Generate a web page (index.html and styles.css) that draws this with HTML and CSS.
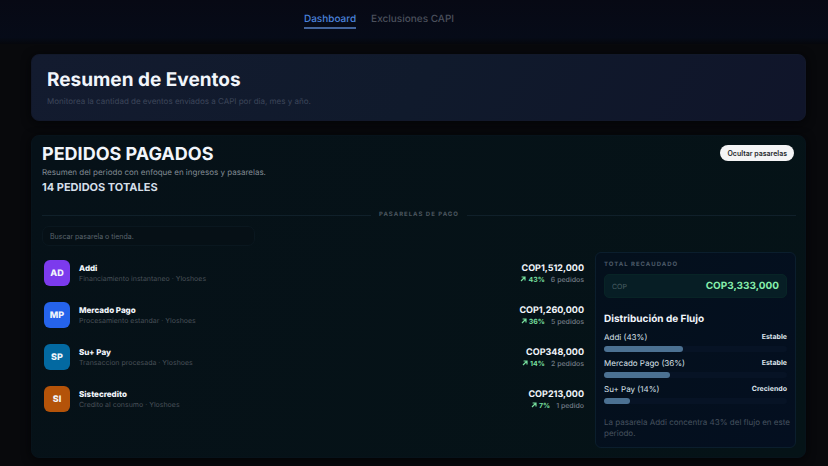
FILE: index.html
```html
<!DOCTYPE html>
<html lang="es">
<head>
<meta charset="utf-8">
<meta name="viewport" content="width=device-width, initial-scale=1">
<title>Resumen de Eventos</title>
<link rel="stylesheet" href="styles.css">
</head>
<body>
<svg class="defs" aria-hidden="true"><symbol id="up" viewBox="0 0 6 6"><path d="M1 5 5 1M1.6 1H5v3.4" fill="none" stroke="currentColor" stroke-width="1.2"/></symbol></svg>
<nav class="nav">
  <a class="tab active" href="#dashboard">Dashboard</a>
  <a class="tab" href="#exclusiones">Exclusiones CAPI</a>
</nav>
<main class="page">
  <header class="hero">
    <h1>Resumen de Eventos</h1>
    <p>Monitorea la cantidad de eventos enviados a CAPI por dia, mes y año.</p>
  </header>
  <section class="orders">
    <div class="top">
      <div>
        <h2>PEDIDOS PAGADOS</h2>
        <p class="sub">Resumen del periodo con enfoque en ingresos y pasarelas.</p>
        <p class="count">14 PEDIDOS TOTALES</p>
      </div>
      <button class="hide" type="button">Ocultar pasarelas</button>
    </div>
    <div class="divider"><span>PASARELAS DE PAGO</span></div>
    <input class="search" type="text" aria-label="Buscar pasarela o tienda" placeholder="Buscar pasarela o tienda.">
    <div class="body">
      <ul class="list">
        <li>
          <span class="avatar violet">AD</span>
          <div class="who"><strong>Addi</strong><span>Financiamiento instantaneo · Yloshoes</span></div>
          <div class="sum"><strong>COP1,512,000</strong><span><b><svg class="up"><use href="#up"/></svg>43%</b>6 pedidos</span></div>
        </li>
        <li>
          <span class="avatar blue">MP</span>
          <div class="who"><strong>Mercado Pago</strong><span>Procesamiento estandar · Yloshoes</span></div>
          <div class="sum"><strong>COP1,260,000</strong><span><b><svg class="up"><use href="#up"/></svg>36%</b>5 pedidos</span></div>
        </li>
        <li>
          <span class="avatar cyan">SP</span>
          <div class="who"><strong>Su+ Pay</strong><span>Transaccion procesada · Yloshoes</span></div>
          <div class="sum"><strong>COP348,000</strong><span><b><svg class="up"><use href="#up"/></svg>14%</b>2 pedidos</span></div>
        </li>
        <li>
          <span class="avatar orange">SI</span>
          <div class="who"><strong>Sistecredito</strong><span>Credito al consumo · Yloshoes</span></div>
          <div class="sum"><strong>COP213,000</strong><span><b><svg class="up"><use href="#up"/></svg>7%</b>1 pedido</span></div>
        </li>
      </ul>
      <aside class="side">
        <p class="label">TOTAL RECAUDADO</p>
        <div class="total"><span>COP</span><strong>COP3,333,000</strong></div>
        <h3>Distribución de Flujo</h3>
        <div class="flow"><span>Addi (43%)</span><b>Estable</b></div>
        <div class="bar"><i style="width:43%"></i></div>
        <div class="flow"><span>Mercado Pago (36%)</span><b>Estable</b></div>
        <div class="bar"><i style="width:36%"></i></div>
        <div class="flow"><span>Su+ Pay (14%)</span><b>Creciendo</b></div>
        <div class="bar"><i style="width:14%"></i></div>
        <p class="note">La pasarela Addi concentra 43% del flujo en este periodo.</p>
      </aside>
    </div>
  </section>
</main>
</body>
</html>
```
FILE: styles.css
```css
* { box-sizing: border-box; margin: 0; padding: 0; }
body { background: #08090c; color: #f1f5fb; font-family: Inter, "Liberation Sans", sans-serif; font-size: 8px; text-rendering: geometricPrecision; }
.defs { display: none; }
.nav { display: flex; justify-content: center; gap: 15px; height: 44px; padding: 10px 70px 0 0; background: linear-gradient(#070914, #060b18 85%, #05070c); }
.tab { height: 19px; font-size: 10px; line-height: 18px; font-weight: 500; color: #4b505c; text-decoration: none; }
.tab.active { color: #4b83dc; border-bottom: 2px solid #43649a; }
.page { padding: 10px 22px 8px 31px; }
.hero { padding: 13px 15px; border: 1px solid #12182a; border-radius: 8px; background: linear-gradient(120deg, #131b2f, #101a2c 50%, #10152a); box-shadow: 0 2px 10px #030406; }
h1 { font-size: 19px; line-height: 24px; font-weight: 700; }
.hero p { margin-top: 3px; font-size: 8px; line-height: 12px; color: #3d465a; }
.orders { margin-top: 14px; padding: 8px 9px 9px 10px; border: 1px solid #07131b; border-radius: 8px; background: linear-gradient(120deg, #061118, #051317); box-shadow: 0 2px 10px #030406; }
.top { display: flex; justify-content: space-between; align-items: flex-start; }
h2 { font-size: 18px; line-height: 22px; font-weight: 700; }
.sub { line-height: 12px; color: #828b94; }
.count { margin-top: 2px; font-size: 11px; line-height: 14px; font-weight: 700; color: #d5dfe8; }
.hide { margin: 1px 2px 0 0; height: 16px; padding: 0 7px; border: 0; border-radius: 8px; background: #f4f4f5; color: #25282c; font: 600 7px Inter, sans-serif; }
.divider { display: flex; align-items: center; gap: 8px; margin-top: 15px; line-height: 12px; font-size: 6px; font-weight: 700; letter-spacing: 1px; color: #4b565f; }
.divider::before, .divider::after { content: ""; flex: 1; height: 1px; background: #10202a; }
.search { display: block; width: 213px; height: 20px; margin-top: 5px; padding: 0 7px; border: 1px solid #0a171f; border-radius: 7px; background: #061016; color: #9aa4ae; font: 7px Inter, sans-serif; }
.search::placeholder { color: #5a646d; opacity: 1; }
.body { display: grid; grid-template-columns: 1fr 201px; gap: 11px; margin-top: 6px; }
.list { list-style: none; display: flex; flex-direction: column; gap: 16px; padding: 8px 0 0 2px; }
.list li { display: flex; align-items: center; height: 26px; }
.avatar { display: grid; place-items: center; width: 26px; height: 26px; border-radius: 6px; font-size: 9px; font-weight: 800; }
.violet { background: #7c3aed; }
.blue { background: #2563eb; }
.cyan { background: #0369a1; }
.orange { background: #b45309; }
.who { flex: 1; margin-left: 9px; }
.who strong, .who span, .sum strong, .sum > span { display: block; }
.who strong { font-size: 8px; line-height: 11px; font-weight: 800; }
.who span { font-size: 7px; line-height: 9px; color: #485057; }
.sum { padding-top: 2px; text-align: right; }
.sum strong { font-size: 9px; line-height: 12px; font-weight: 700; }
.sum > span { font-size: 7px; line-height: 10px; color: #737d87; font-weight: 500; }
.sum b { margin-right: 6px; color: #75dd9c; font-weight: 700; }
.up { width: 6px; height: 6px; margin-right: 2px; }
.side { padding: 7px 8px 8px; border: 1px solid #0b1e2d; border-radius: 6px; background: linear-gradient(120deg, #04101c, #040f20); }
.label { font-size: 6px; line-height: 10px; font-weight: 700; letter-spacing: 1px; color: #4d5b69; }
.total { display: flex; justify-content: space-between; align-items: center; height: 24px; margin-top: 4px; padding: 0 7px; border: 1px solid #082426; border-radius: 5px; background: #071e25; }
.total span { font-size: 7px; color: #4a5e64; }
.total strong { font-size: 10px; font-weight: 700; color: #86efac; }
h3 { margin: 14px 0 3px; font-size: 10px; line-height: 14px; font-weight: 700; }
.flow { display: flex; justify-content: space-between; height: 16px; line-height: 16px; font-size: 8px; color: #dbe3eb; }
.flow b { font-size: 7px; font-weight: 700; }
.bar { height: 6px; margin: 1px 0 3px; border-radius: 3px; background: #071325; }
.bar i { display: block; height: 100%; border-radius: 3px; background: #4c7192; }
.note { margin: 13px -6px 0 0; font-size: 8px; line-height: 11px; color: #46525f; }
```
